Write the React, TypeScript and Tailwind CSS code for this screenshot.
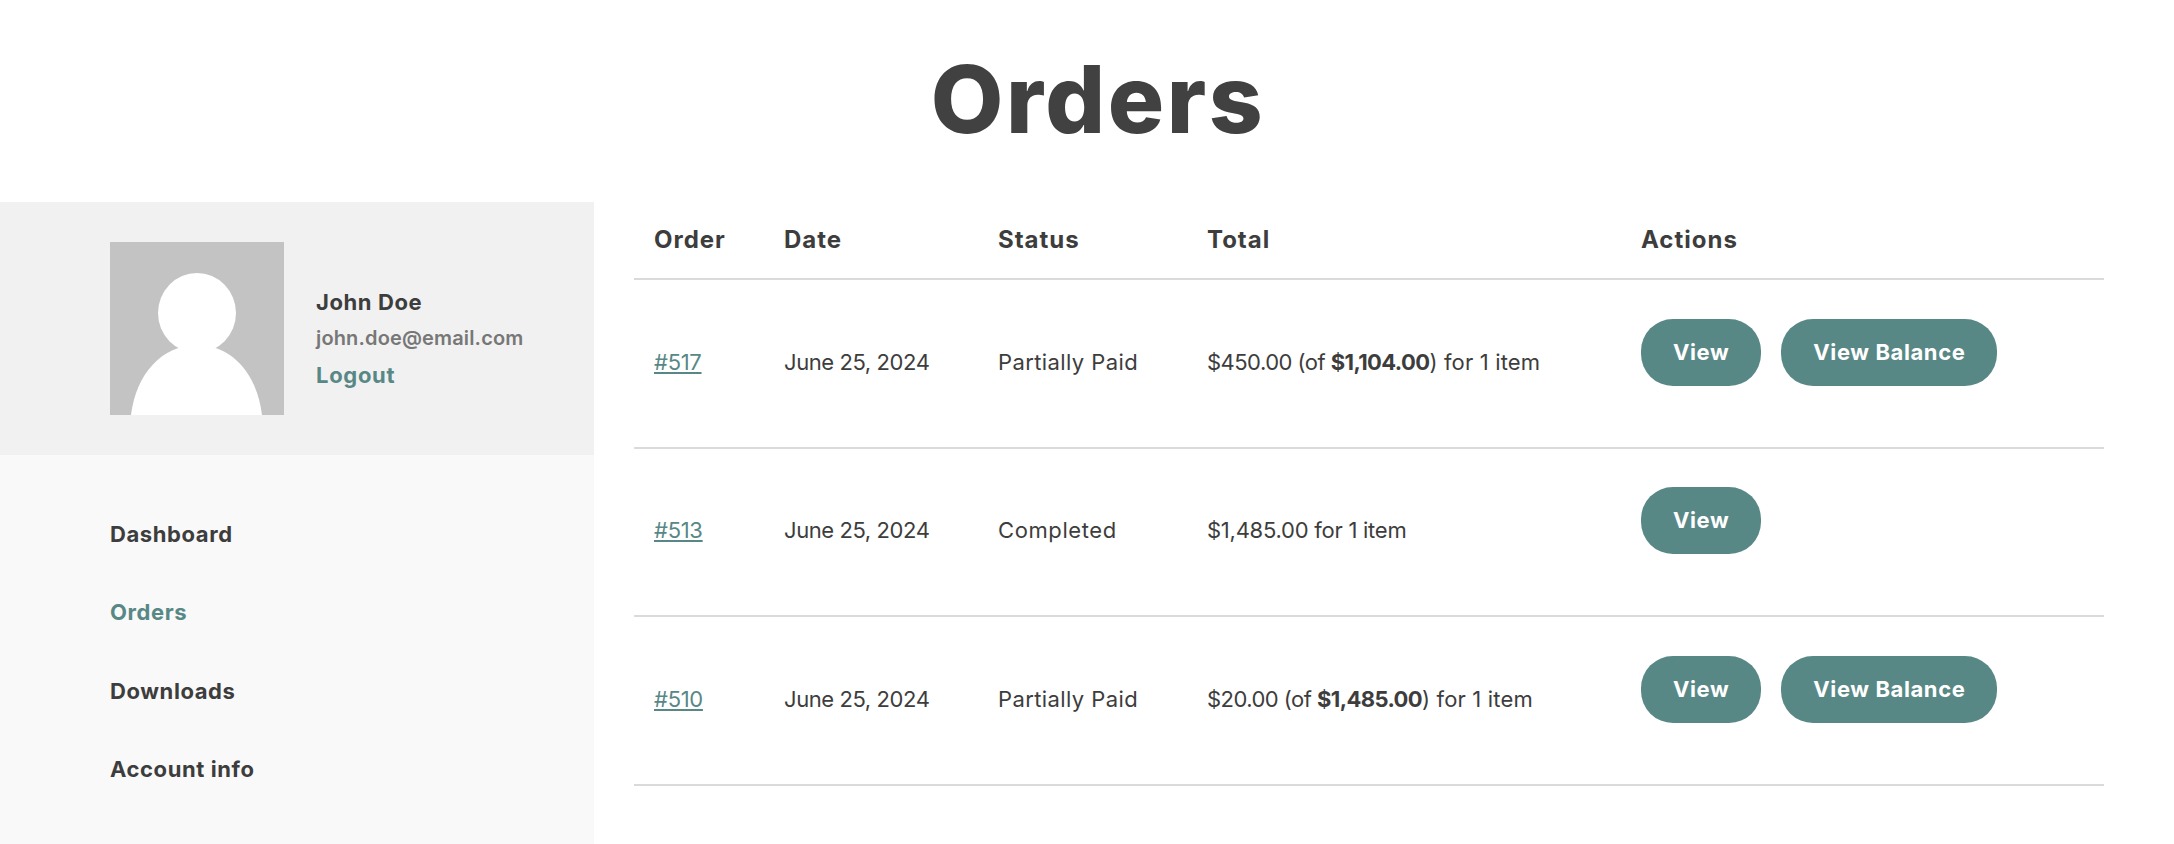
const sans = "font-['Inter','Liberation_Sans',sans-serif]";

const orders = [
  { id: "#517", status: "Partially Paid", statusClass: "tracking-[0.4px]", paid: "$450.00 (of ", total: "$1,104.00", rest: ") for 1 item", balance: true },
  { id: "#513", status: "Completed", statusClass: "tracking-[0.6px]", paid: "$1,485.00 for 1 item", total: "", rest: "", balance: false },
  { id: "#510", status: "Partially Paid", statusClass: "tracking-[0.4px]", paid: "$20.00 (of ", total: "$1,485.00", rest: ") for 1 item", balance: true },
];

const navItems = ["Dashboard", "Orders", "Downloads", "Account info"];

function Avatar() {
  return (
    <svg viewBox="0 0 174 173" className="w-[174px] h-[173px] shrink-0">
      <rect width="174" height="173" fill="#c3c3c3" />
      <ellipse cx="87" cy="71" rx="39" ry="40" fill="#fff" />
      <path d="M21 173C26 132 52 103 87 103C122 103 147 132 152 173Z" fill="#fff" />
    </svg>
  );
}

function ActionButton({ label }: { label: string }) {
  return (
    <a className="inline-flex items-center justify-center h-[67px] px-8 rounded-[32px] bg-[#588886] text-white text-[22px] font-bold tracking-[0.6px]">
      {label}
    </a>
  );
}

export default function App() {
  return (
    <div className={`min-h-[844px] bg-white text-[#3d3d3d] ${sans}`}>
      <h1 className="h-[202px] flex items-center justify-center pl-[22px] pb-[4px] text-[94px] font-extrabold tracking-[2.5px] text-[#414141]">
        Orders
      </h1>
      <div className="flex">
        <aside className="w-[594px] h-[642px] shrink-0 bg-[#f9f9f9]">
          <div className="flex items-center gap-[32px] h-[253px] pl-[110px] bg-[#f1f1f1]">
            <Avatar />
            <div className="flex flex-col gap-[10px] pt-[21px]">
              <span className="text-[22px] leading-[26px] font-bold tracking-[0.6px]">John Doe</span>
              <span className="text-[20px] leading-[26px] font-semibold tracking-[0.15px] text-[#777777]">john.doe@email.com</span>
              <a className="text-[22px] leading-[28px] font-bold tracking-[0.7px] text-[#588886]">Logout</a>
            </div>
          </div>
          <nav className="flex flex-col gap-[48.4px] pt-[64px] pl-[110px]">
            {navItems.map((item) => (
              <a
                key={item}
                className={`text-[22px] leading-[30px] font-bold tracking-[0.6px] ${item === "Orders" ? "text-[#588886]" : "text-[#3d3d3d]"}`}
              >
                {item}
              </a>
            ))}
          </nav>
        </aside>
        <main className="w-[1470px] ml-[40px]">
          <table className="w-full table-fixed border-collapse text-left text-[22px]">
            <colgroup>
              <col className="w-[130px]" />
              <col className="w-[214px]" />
              <col className="w-[209px]" />
              <col className="w-[434px]" />
              <col />
            </colgroup>
            <thead>
              <tr className="h-[77px] border-b-2 border-[#dadada] text-[24px] tracking-[1px]">
                <th className="px-5 font-bold">Order</th>
                <th className="px-5 font-bold">Date</th>
                <th className="px-5 font-bold">Status</th>
                <th className="px-5 font-bold">Total</th>
                <th className="px-5 font-bold">Actions</th>
              </tr>
            </thead>
            <tbody>
              {orders.map((order) => (
                <tr key={order.id} className="h-[168.5px] border-b-2 border-[#dadada]">
                  <td className="px-5 pb-[2px] tracking-[-0.3px]">
                    <a className="underline text-[#588886]">{order.id}</a>
                  </td>
                  <td className="px-5 pb-[2px] tracking-[-0.42px]">June 25, 2024</td>
                  <td className={`px-5 pb-[2px] ${order.statusClass}`}>{order.status}</td>
                  <td className="px-5 pb-[2px]">
                    <span className={order.total ? "tracking-[-0.53px]" : "tracking-[-0.25px]"}>{order.paid}</span>
                    {order.total && <strong className="font-bold tracking-[-0.6px]">{order.total}</strong>}
                    <span className="tracking-[0.16px]">{order.rest}</span>
                  </td>
                  <td className="px-5">
                    <div className="flex gap-5 pb-[22px]">
                      <ActionButton label="View" />
                      {order.balance && <ActionButton label="View Balance" />}
                    </div>
                  </td>
                </tr>
              ))}
            </tbody>
          </table>
        </main>
      </div>
    </div>
  );
}
